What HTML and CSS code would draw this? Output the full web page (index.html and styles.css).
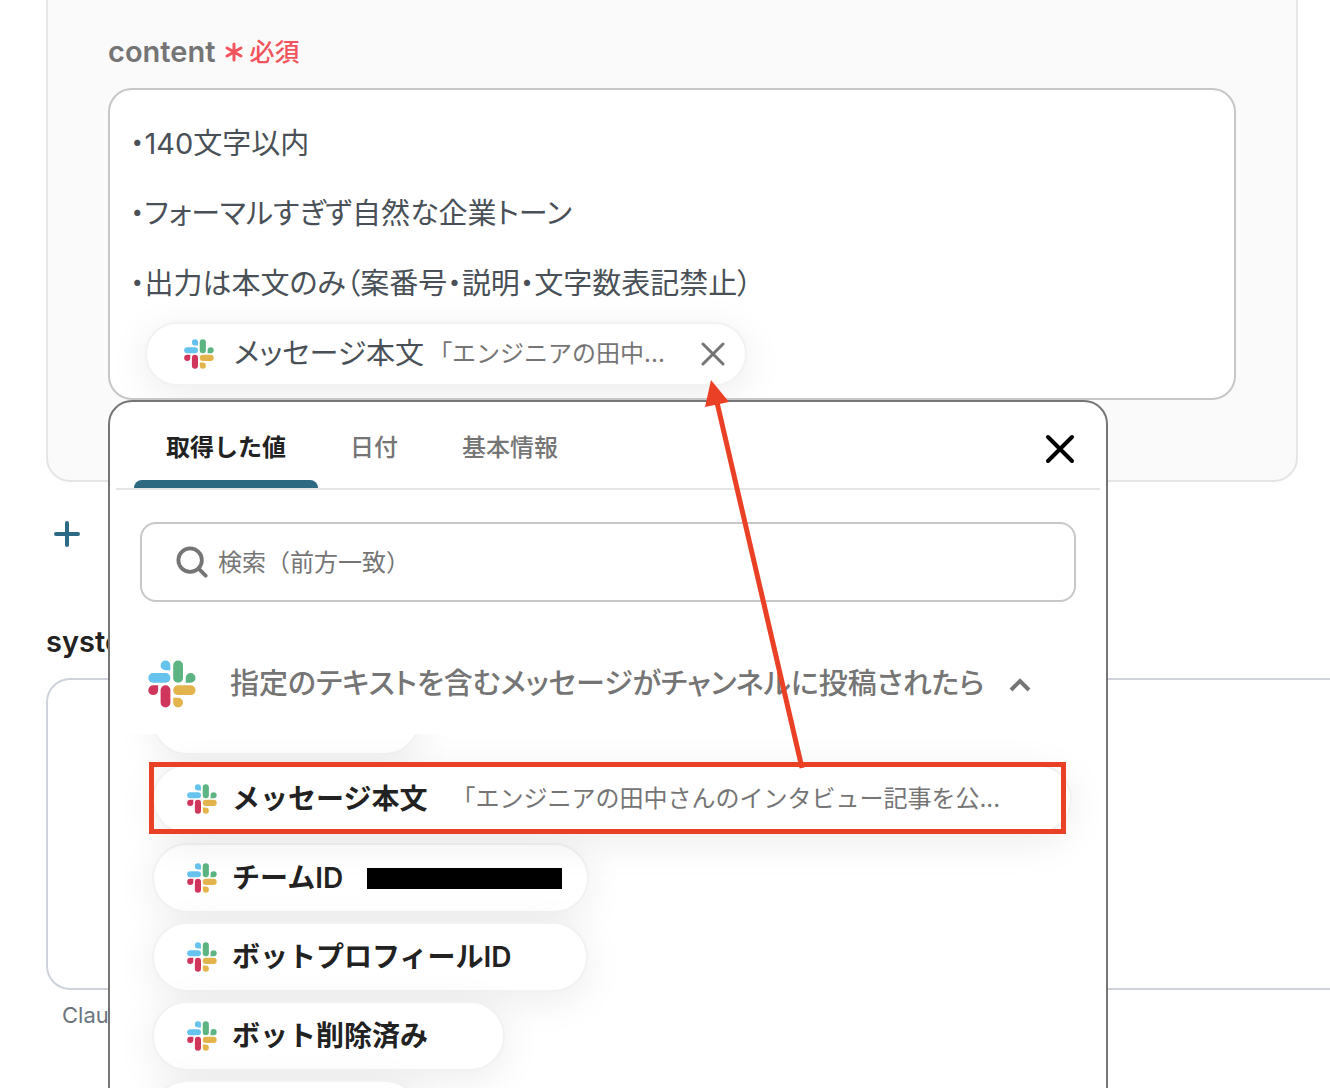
FILE: index.html
```html
<!DOCTYPE html>
<html lang="ja">
<head>
    <meta charset="UTF-8">
    <meta name="viewport" content="width=device-width, initial-scale=1.0">
    <title>content</title>
    <link rel="stylesheet" href="styles.css">
</head>
<body>
    <svg class="sprite" aria-hidden="true">
        <symbol id="slack" viewBox="0 0 48 48">
            <path fill="#66c3ee" d="M17.5 0.5a4.8 4.8 0 0 0 0 9.8h4.9V5.4a4.9 4.9 0 0 0-4.9-4.9z"/>
            <rect fill="#66c3ee" x="0.3" y="13" width="22.1" height="9.8" rx="4.9"/>
            <rect fill="#5cb482" x="25.2" y="0.5" width="9.8" height="22.3" rx="4.9"/>
            <path fill="#5cb482" d="M47.5 17.9a4.9 4.9 0 0 0-9.8 0v4.9h4.9a4.9 4.9 0 0 0 4.9-4.9z"/>
            <rect fill="#e4b44c" x="25.2" y="25.3" width="22.3" height="9.8" rx="4.9"/>
            <path fill="#e4b44c" d="M30.1 47.5a4.9 4.9 0 0 0 0-9.8h-4.9v4.9a4.9 4.9 0 0 0 4.9 4.9z"/>
            <rect fill="#d0355c" x="12.6" y="25.3" width="9.8" height="22.2" rx="4.9"/>
            <path fill="#d0355c" d="M0.3 30.2a4.9 4.9 0 0 0 9.8 0v-4.9H5.2a4.9 4.9 0 0 0-4.9 4.9z"/>
        </symbol>
    </svg>

    <main class="page">
        <section class="panel">
            <div class="field-label" id="content-label">
                content
                <span class="required">
                    <svg width="20" height="20" viewBox="0 0 20 20" aria-hidden="true"><path d="M10 2v16M3 6l14 8M17 6L3 14"/></svg>必須
                </span>
            </div>
            <div class="field">
                <div class="editor" role="textbox" aria-multiline="true" aria-labelledby="content-label" contenteditable="true" spellcheck="false">
                    <p>・140文字以内</p>
                    <p>・フォーマルすぎず自然な企業トーン</p>
                    <p>・出力は本文のみ（案番号・説明・文字数表記禁止）</p>
                    <div class="token" contenteditable="false">
                        <svg class="logo-small" aria-hidden="true"><use href="#slack"/></svg>
                        <span class="token-name">メッセージ本文</span>
                        <span class="value">「エンジニアの田中...</span>
                        <button type="button" class="token-close" aria-label="削除">
                            <svg width="24" height="24" viewBox="0 0 24 24"><path d="M2 2l20 20M22 2L2 22"/></svg>
                        </button>
                    </div>
                </div>

                <div class="picker">
                    <div class="picker-head">
                        <div class="tabs" role="tablist">
                            <button type="button" class="tab active" role="tab" aria-selected="true">取得した値</button>
                            <button type="button" class="tab" role="tab" aria-selected="false">日付</button>
                            <button type="button" class="tab" role="tab" aria-selected="false">基本情報</button>
                        </div>
                        <button type="button" class="picker-close" aria-label="閉じる">
                            <svg width="32" height="32" viewBox="0 0 32 32"><path d="M4 4l24 24M28 4L4 28"/></svg>
                        </button>
                    </div>

                    <label class="search">
                        <svg width="32" height="32" viewBox="0 0 34 34" aria-hidden="true"><circle cx="15" cy="15" r="12.5"/><path d="M24 24l7.5 7.5"/></svg>
                        <input type="text" aria-label="検索" placeholder="検索（前方一致）">
                    </label>

                    <button type="button" class="group" aria-expanded="true">
                        <svg class="logo-large" aria-hidden="true"><use href="#slack"/></svg>
                        <span>指定のテキストを含むメッセージがチャンネルに投稿されたら</span>
                        <svg class="chevron" width="24" height="24" viewBox="0 0 24 24" aria-hidden="true"><path d="M3 18l9-9 9 9"/></svg>
                    </button>

                    <div class="scroller">
                        <ul class="outputs">
                            <li class="blank"><button type="button" class="output" aria-label="取得した値"></button></li>
                            <li class="marked">
                                <button type="button" class="output wide">
                                    <svg class="logo-small" aria-hidden="true"><use href="#slack"/></svg>
                                    <span class="output-name">メッセージ本文</span>
                                    <span class="value">「エンジニアの田中さんのインタビュー記事を公...</span>
                                </button>
                            </li>
                            <li>
                                <button type="button" class="output">
                                    <svg class="logo-small" aria-hidden="true"><use href="#slack"/></svg>
                                    <span class="output-name">チームID</span>
                                    <span class="redacted"></span>
                                </button>
                            </li>
                            <li>
                                <button type="button" class="output">
                                    <svg class="logo-small" aria-hidden="true"><use href="#slack"/></svg>
                                    <span class="output-name">ボットプロフィールID</span>
                                    <span class="value"></span>
                                </button>
                            </li>
                            <li>
                                <button type="button" class="output">
                                    <svg class="logo-small" aria-hidden="true"><use href="#slack"/></svg>
                                    <span class="output-name">ボット削除済み</span>
                                    <span class="value"></span>
                                </button>
                            </li>
                            <li class="blank"><button type="button" class="output" aria-label="取得した値"></button></li>
                        </ul>
                    </div>
                </div>
            </div>
        </section>

        <button type="button" class="add" aria-label="追加">
            <svg width="28" height="28" viewBox="0 0 28 28"><path d="M14 3v22M3 14h22"/></svg>
        </button>

        <section class="system">
            <label for="system">system</label>
            <textarea id="system"></textarea>
            <p class="hint">Claude</p>
        </section>

        <svg class="arrow" width="120" height="400" viewBox="0 0 120 400" aria-hidden="true">
            <path class="arrow-line" d="M102 392L16 22"/>
            <path class="arrow-head" d="M11 4L5 31L29 26z"/>
        </svg>
    </main>
</body>
</html>
```
FILE: styles.css
```css
* {
    box-sizing: border-box;
}
body {
    margin: 0;
    font-family: Inter, "Noto Sans CJK JP", sans-serif;
    font-size: 29px;
    color: #222;
    background-color: #fff;
}
button {
    margin: 0;
    padding: 0;
    border: 0;
    background: none;
    font: inherit;
    color: inherit;
    cursor: pointer;
}
svg {
    flex: none;
    fill: none;
    stroke-linecap: round;
}
.sprite {
    position: absolute;
    width: 0;
    height: 0;
}
.page {
    position: relative;
    height: 100vh;
    padding-left: 46px;
    overflow: hidden;
}

/* content field */
.panel {
    margin-right: 32px;
    padding: 28px 60px 80px;
    border: 2px solid #e5e5e5;
    border-top: 0;
    border-radius: 0 0 24px 24px;
    background-color: #fafafa;
}
.field-label {
    display: flex;
    align-items: center;
    gap: 9px;
    height: 48px;
    margin-bottom: 12px;
    font-weight: 600;
    line-height: 32px;
    color: #757575;
}
.required {
    display: flex;
    align-items: center;
    gap: 5px;
    font-size: 25px;
    font-weight: 500;
    color: #f0555d;
}
.required svg {
    stroke: #f0555d;
    stroke-width: 3;
}
.field {
    position: relative;
}
.editor {
    padding: 19px 20px 12px;
    border: 2px solid #c7c7c7;
    border-radius: 24px;
    background-color: #fff;
    color: #495057;
    line-height: 70px;
    font-feature-settings: "palt";
    outline: none;
    overflow: hidden;
}
.editor p {
    margin: 0;
}
.token {
    display: flex;
    align-items: center;
    width: fit-content;
    height: 64px;
    margin: 3px 0 0 15px;
    padding: 0 20px 0 37px;
    border: 2px solid #f2f2f2;
    border-radius: 32px;
    background-color: #fff;
    box-shadow: 0 8px 40px rgba(0, 0, 0, 0.08);
    line-height: 32px;
}
.token-name {
    margin: 0 4px 0 20px;
}
.token-close {
    display: flex;
    margin-left: 36px;
}
.token-close svg {
    stroke: #757575;
    stroke-width: 3;
}
.value {
    min-width: 26px;
    font-size: 24px;
    font-weight: 400;
    font-feature-settings: normal;
    color: #757575;
}
.logo-small {
    width: 30px;
    height: 30px;
}
.logo-large {
    width: 48px;
    height: 48px;
}

/* value picker */
.picker {
    position: absolute;
    top: 100%;
    left: 0;
    right: 128px;
    z-index: 1;
    padding: 0 6px;
    border: 2px solid #757575;
    border-radius: 24px;
    background-color: #fff;
}
.picker-head {
    display: flex;
    align-items: stretch;
    justify-content: space-between;
    height: 88px;
    padding: 0 24px 0 18px;
    border-bottom: 2px solid #e5e5e5;
}
.tabs {
    display: flex;
}
.tab {
    position: relative;
    padding: 0 32px;
    font-size: 24px;
    font-weight: 500;
    color: #757575;
}
.tab.active {
    font-weight: 600;
    color: #222;
}
.tab.active::after {
    content: "";
    position: absolute;
    left: 0;
    right: 0;
    bottom: 0;
    height: 8px;
    border-radius: 8px 8px 0 0;
    background-color: #2d6980;
}
.picker-close {
    display: flex;
    align-items: center;
    padding-top: 8px;
}
.picker-close svg {
    stroke: #000;
    stroke-width: 4;
}
.search {
    display: flex;
    align-items: center;
    gap: 10px;
    height: 80px;
    margin: 32px 24px;
    padding: 0 34px;
    border: 2px solid #c7c7c7;
    border-radius: 16px;
}
.search svg {
    stroke: #757575;
    stroke-width: 4;
}
.search input {
    flex: 1;
    min-width: 0;
    padding: 0;
    border: 0;
    outline: none;
    font: inherit;
    font-size: 24px;
}
.search input::placeholder {
    color: #757575;
    opacity: 1;
}
.group {
    display: flex;
    align-items: center;
    width: 100%;
    height: 100px;
    padding-left: 32px;
    font-weight: 500;
    line-height: 32px;
    font-feature-settings: "palt";
    color: #757575;
}
.group span {
    margin: 0 24px 0 34px;
}
.chevron {
    stroke: #757575;
    stroke-width: 4;
    stroke-linecap: butt;
}
.scroller {
    overflow: hidden;
}
.outputs {
    display: flex;
    flex-direction: column;
    gap: 9px;
    margin: -49px 0 0;
    padding: 0 28px 32px 36px;
    list-style: none;
}
.outputs li {
    display: flex;
}
.output {
    display: flex;
    align-items: center;
    height: 70px;
    padding: 0 25px 0 33px;
    border: 2px solid #f2f2f2;
    border-radius: 35px;
    background-color: #fff;
    box-shadow: 0 8px 40px rgba(0, 0, 0, 0.08);
    line-height: 32px;
    white-space: nowrap;
}
.output.wide {
    width: 100%;
}
.output-name {
    margin: 0 24px 0 15px;
    font-size: 28px;
    font-weight: 600;
}
.blank .output {
    width: 268px;
}
.redacted {
    width: 195px;
    height: 21px;
    background-color: #000;
}
.marked {
    position: relative;
}
.marked::after {
    content: "";
    position: absolute;
    top: -2px;
    right: 6px;
    bottom: 0;
    left: -3px;
    border: 5px solid #ea4025;
}

/* rest of the form */
.add {
    display: flex;
    margin: 38px 0 70px 7px;
}
.add svg {
    stroke: #2d6a86;
    stroke-width: 4;
}
.system label {
    display: block;
    height: 60px;
    line-height: 48px;
    font-weight: 600;
}
.system textarea {
    display: block;
    width: 100%;
    height: 312px;
    padding: 22px;
    border: 2px solid #ced3db;
    border-right: 0;
    border-radius: 24px 0 0 24px;
    background-color: #fff;
    font: inherit;
    resize: none;
}
.hint {
    margin: 8px 16px;
    font-size: 22px;
    line-height: 34px;
    color: #6c757d;
}
.arrow {
    position: absolute;
    top: 376px;
    left: 700px;
    z-index: 2;
    pointer-events: none;
}
.arrow-line {
    stroke: #ea4025;
    stroke-width: 5;
    stroke-linecap: butt;
}
.arrow-head {
    fill: #ea4025;
}
```
